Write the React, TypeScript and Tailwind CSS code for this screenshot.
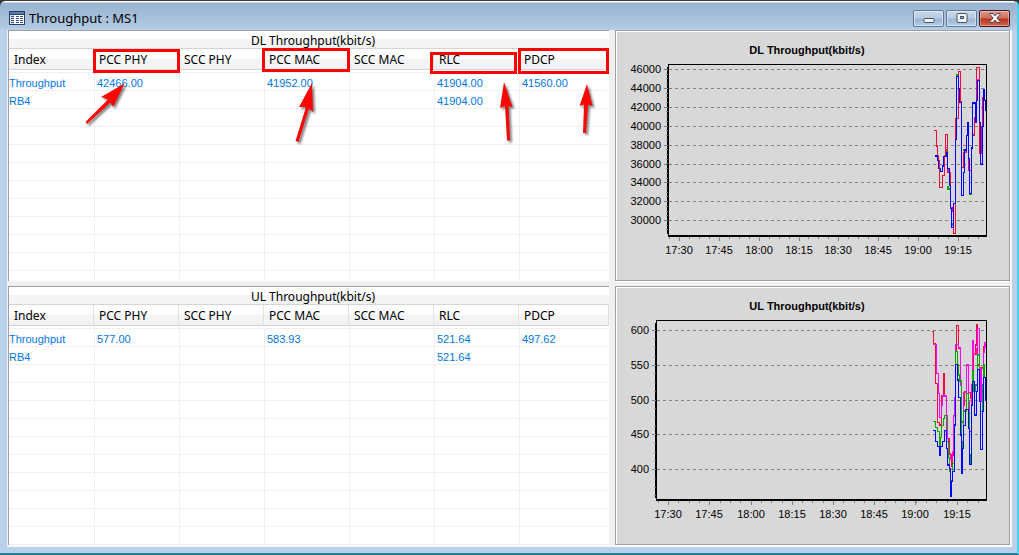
import React from "react";

const columns = ["Index", "PCC PHY", "SCC PHY", "PCC MAC", "SCC MAC", "RLC", "PDCP"];

const dlRows = [
  ["Throughput", "42466.00", "", "41952.00", "", "41904.00", "41560.00"],
  ["RB4", "", "", "", "", "41904.00", ""],
];

const ulRows = [
  ["Throughput", "577.00", "", "583.93", "", "521.64", "497.62"],
  ["RB4", "", "", "", "", "521.64", ""],
];

function DataTable({ title, rows, total }: { title: string; rows: string[][]; total: number }) {
  const filled = Array.from({ length: total }, (_, i) => rows[i] ?? columns.map(() => ""));
  return (
    <table className="w-full table-fixed border-separate border-spacing-0 bg-white">
      <caption className="h-[18px] border-b border-[#d5d5d5] bg-[linear-gradient(#fff_45%,#f2f4f6_50%,#f2f4f6)] pl-2 text-center text-[12px] leading-[20px] text-black">
        {title}
      </caption>
      <colgroup>
        {columns.map((c, i) => (
          <col key={c} className={i === columns.length - 1 ? "w-[15%]" : "w-[14.16%]"} />
        ))}
      </colgroup>
      <thead>
        <tr>
          {columns.map((c) => (
            <th
              key={c}
              scope="col"
              className="h-[21px] border-r border-b border-r-[#e0e3e6] border-b-[#d5d5d5] bg-[linear-gradient(#fff_45%,#f4f5f7_50%,#f1f2f4)] p-0 pt-[2px] pl-[5px] text-left text-[12px] leading-[18px] font-normal text-black"
            >
              {c}
            </th>
          ))}
        </tr>
      </thead>
      <tbody>
        <tr aria-hidden="true">
          {columns.map((c, j) => (
            <td key={c} className={`h-[3px] border-b border-[#f0f0f0] p-0 ${j ? "border-l" : ""}`} />
          ))}
        </tr>
        {filled.map((r, i) => (
          <tr key={i}>
            {r.map((v, j) => (
              <td
                key={j}
                className={`h-[18px] border-b border-[#f0f0f0] p-0 pt-[4px] ${j ? "border-l pl-[2px]" : ""} font-['Liberation_Sans',sans-serif] text-[11px] leading-[13px] text-[#0078e0]`}
              >
                {v}
              </td>
            ))}
          </tr>
        ))}
      </tbody>
    </table>
  );
}

type Series = { color: string; d: string; width?: number };
type ChartProps = {
  title: string;
  viewBox: string;
  titleY: number;
  plot: { left: number; top: number; bottom: number };
  yTicks: [string, number][];
  yMinor: number;
  xTicks: number[];
  xMinor: number;
  origin: string;
  series: Series[];
};

const times = ["17:30", "17:45", "18:00", "18:15", "18:30", "18:45", "19:00", "19:15"];
const RIGHT = 986;

function range(from: number, to: number, step: number) {
  const out: number[] = [];
  for (let v = from; v <= to; v += step) out.push(Math.round(v));
  return out;
}

function Chart({ title, viewBox, titleY, plot, yTicks, yMinor, xTicks, xMinor, origin, series }: ChartProps) {
  const { left, top, bottom } = plot;
  const firstY = yTicks[0][1];
  const minorY = range(firstY, bottom - 3, yMinor);
  const minorX = range(xTicks[0] - xMinor, RIGHT - 2, xMinor);
  return (
    <svg
      viewBox={viewBox}
      className="block h-full w-full font-['Liberation_Sans',sans-serif] text-[11px]"
      role="img"
      aria-label={title}
    >
      <text x="807" y={titleY} textAnchor="middle" className="font-bold">
        {title}
      </text>
      <g shapeRendering="crispEdges">
        {yTicks.map(([label, y]) => (
          <g key={label} stroke="#808080">
            <path d={`M${left - 4} ${y + 0.5}H${left}`} />
            <path d={`M${left + 1} ${y + 0.5}H${RIGHT}`} strokeDasharray="3 3" />
          </g>
        ))}
        <path d={`M${left - 0.5} ${top + 3}V${bottom - 2}`} stroke="#000" />
        {minorY.map((y) => (
          <path key={y} d={`M${left - 2} ${y + 0.5}H${left}`} stroke="#808080" />
        ))}
        {minorX.map((x) => (
          <path key={x} d={`M${x + 0.5} ${bottom + 1}V${bottom + 3}`} stroke="#808080" />
        ))}
        {xTicks.map((x) => (
          <path key={x} d={`M${x + 0.5} ${bottom + 1}V${bottom + 5}`} stroke="#808080" />
        ))}
        <g transform={origin} fill="none">
          {series.map((s, i) => (
            <path key={i} d={s.d} stroke={s.color} strokeWidth={s.width ?? 3.6} />
          ))}
        </g>
        <path d={`M${left + 0.5} ${bottom}V${top + 0.5}H${RIGHT + 0.5}V${bottom}`} fill="none" stroke="#000" />
        <path d={`M${left} ${bottom}H${RIGHT + 1}`} stroke="#000" strokeWidth="2" />
      </g>
      {yTicks.map(([label, y]) => (
        <text key={label} x={left - 7} y={y + 4} textAnchor="end">
          {label}
        </text>
      ))}
      {xTicks.map((x, i) => (
        <text key={x} x={x} y={bottom + 18} textAnchor="middle">
          {times[i]}
        </text>
      ))}
    </svg>
  );
}

const RED = "#f5093c";
const BLUE = "#0000ff";
const GREEN = "#00a800";
const MAGENTA = "#ff00ff";

const dlSeries: Series[] = [
  { color: GREEN, d: "M105 302H112M136 284H142V292M145 392V401H150M169 59H176M202 203H207M202 207H207M208 418H215M178 101V112M154 508H160M190 284H200M133 304H137", width: 6 },
  { color: RED, d: "M102 227H109V273H112V302H115V317H119V397H127V361H133V304H137V238H142V352H151V457H157V470H161V535H166V447H167V190H175V49H181V140H184V338H190V292H200V242H205V346H214V279H217V240H223V187H229V38H238V296H245V216H248V127H254V104" },
  { color: MAGENTA, d: "M121 349H127M136 277H142M217 142H224M232 73H239M241 326H247M250 104H254M193 290H199M154 511H158M147 342V351" },
  { color: BLUE, d: "M105 303H112V317H115V340H121V349H127V333H130V305H139V293H142V341H148V391H151V460H154V517H160V445H166V254H169V64H175V101H178V142H184V421H190V352H193V285H199V242H202V203H206V310H208V416H214V279H217V144H226V202H229V136H232V76H238V203H241V328H247V214H250V104H253V136H257V167" },
];

const ulSeries: Series[] = [
  { color: RED, d: "M97 79H100V117H106V235H112V352H118V360H124V273H130V205H133V273H139V400H148V448H154V485H157V450H160V333H166V140H169V61H175V130H181V240H184V352H190V300H193V260H199V180H205V262H211V279H214V240H220V145H226V120H230V58H233V180H238V210H241V187H250V125H257" },
  { color: MAGENTA, d: "M100 118H109V205H115V265H118V338H124V300H127V273H139V333H142V400H145V445H151V462H157V440H160V335H163V277H166V118H175V128H181V240H184V350H190V262H199V178H206V290H208V380H214V240H217V107H220V148H229V130H232V70H239V190H241V290H245V190H250V143H254V113H257V130" },
  { color: GREEN, d: "M100 350H106V367H112V380H118V420H121V397H124V361H130V341H133V331H139V410H145V458H148V500H151V528H157V475H163V360H166V140H172V180H175V210H178V228H184V430H187V410H190V318H199V265H206V320H208V450H211V475H214V300H217V197H220V260H226V240H232V150H238V290H241V320H248V240H251V180H254V215" },
  { color: BLUE, d: "M100 376H106V409H112V425H118V451H121V425H127V409H133V376H139V430H142V480H148V490H151V574H154V530H157V499H163V360H166V178H172V225H175V277H181V390H184V505H187V430H190V361H196V314H206V370H208V478H214V300H217V229H223V330H229V260H232V193H238V290H241V433H247V320H250V217H256V287" },
];

function Annotations() {
  return (
    <svg
      viewBox="9 31 600 250"
      className="pointer-events-none absolute inset-0 h-full w-full"
      aria-hidden="true"
    >
      <g fill="none" stroke="#ff0000" strokeWidth="3">
        <rect x="94.5" y="50.5" width="84" height="21" />
        <rect x="263.5" y="49.5" width="85" height="21" />
        <rect x="431.5" y="53.5" width="84" height="19" />
        <rect x="519.5" y="49.5" width="88" height="23" />
      </g>
      <g fill="#fb0505" className="drop-shadow-[2px_2px_1px_rgba(0,0,0,0.5)]">
        <path d="M124.500 83.500L101 97L108 99.500L85.500 122L87 124L110.500 102.500L113 107Z" />
        <path d="M312 83L299 107L306 107L295.500 141L298.500 142L309 108.500L313 112Z" />
        <path d="M504 82L500 108L505 106L507 140.500L510 140.500L508.500 106L512.500 107Z" />
        <path d="M587 84L579.500 106L584 104.500L583 133L586 133L588 104.500L592.500 106Z" />
      </g>
    </svg>
  );
}

function TitleBar() {
  const glass =
    "flex h-[17px] w-[31px] items-center justify-center rounded-[2px] border border-[#5d7796] bg-[linear-gradient(#c5d7ea,#b7cce2_48%,#9ab5d1_52%,#b4cde6)] shadow-[inset_0_0_0_1px_rgba(255,255,255,0.5)]";
  return (
    <header className="flex h-[29px] shrink-0 items-center pt-[5px] pr-[7px] pl-[9px]">
      <svg width="16" height="14" viewBox="0 0 16 14" className="shrink-0" shapeRendering="crispEdges" aria-hidden="true">
        <rect width="16" height="14" fill="#2b3f63" />
        <rect x="1" y="1" width="14" height="2" fill="#5a7db2" />
        <rect x="1" y="4" width="14" height="9" fill="#fff" />
        <rect x="1" y="4" width="4" height="9" fill="#d5e3f5" />
        <path d="M2 5.500H5M2 7.500H5M2 9.500H5M2 11.500H5M7 5.500H10M7 7.500H10M7 9.500H10M7 11.500H10M11 5.500H14M11 7.500H14M11 9.500H14M11 11.500H14" stroke="#3d5580" />
      </svg>
      <h1 className="ml-1 text-[13px] leading-[18px] text-black">Throughput : MS1</h1>
      <div className="ml-auto flex gap-[2px]">
        <button type="button" aria-label="Minimize" className={glass}>
          <svg width="12" height="10" viewBox="0 0 12 10">
            <rect x="1" y="5.500" width="10" height="4" rx="1" fill="#f4f4f4" stroke="#4b5566" />
          </svg>
        </button>
        <button type="button" aria-label="Maximize" className={glass}>
          <svg width="12" height="10" viewBox="0 0 12 10">
            <rect x="1" y=".5" width="10" height="9" rx="1" fill="#f4f4f4" stroke="#4b5566" />
            <rect x="4.500" y="3.500" width="3" height="2" fill="#8fa9c8" stroke="#4b5566" />
          </svg>
        </button>
        <button
          type="button"
          aria-label="Close"
          className="flex h-[17px] w-[31px] items-center justify-center rounded-[2px] border border-[#4a1420] bg-[linear-gradient(#dc9a8c,#cf6d58_48%,#b8321a_52%,#d0694f)] shadow-[inset_0_0_0_1px_rgba(255,255,255,0.35)]"
        >
          <svg width="12" height="10" viewBox="0 0 12 10">
            <path d="M1 .5H4L6 2.800L8 .5H11V1.500L8 5L11 8.500V9.500H8L6 7.200L4 9.500H1V8.500L4 5L1 1.500Z" fill="#f4f4f4" stroke="#4d4450" strokeLinejoin="round" />
          </svg>
        </button>
      </div>
    </header>
  );
}

const tablePanel = "relative min-h-0 overflow-hidden border-t border-l border-[#a0a0a0] bg-white";
const chartPanel =
  "min-h-0 overflow-hidden border border-[#a0a0a0] bg-[#d8d8d8] shadow-[inset_1px_1px_0_#fff,1px_1px_0_#fff]";

export default function App() {
  return (
    <div className="h-screen bg-[#333] font-['Noto_Sans','Open_Sans',sans-serif]">
      <div className="flex h-full flex-col rounded-t-[6px] border-t border-r-2 border-b-2 border-t-[#3a3a40] border-r-[#4cd0f0] border-b-[#1d7f95] bg-[linear-gradient(#fff_0,#fff_1px,#98b3d0_2px,#b0c8e2_26px,#b9d1ea_30px,#b9d1ea)]">
        <TitleBar />
        <main className="mr-[5px] mb-[6px] ml-[7px] grid min-h-0 flex-1 grid-cols-[601fr_395fr] grid-rows-[251fr_259fr] gap-x-[6px] gap-y-[5px] border-r-2 border-b-2 border-l border-r-[#f5f5f5] border-b-[#f8f8f8] border-l-[#f0f0f0] bg-[#f0f0f0]">
          <section className={tablePanel}>
            <DataTable title="DL Throughput(kbit/s)" rows={dlRows} total={12} />
            <Annotations />
          </section>
          <section className={chartPanel}>
            <Chart
              title="DL Throughput(kbit/s)"
              viewBox="616 31 393 249"
              titleY={54}
              plot={{ left: 668, top: 64, bottom: 236 }}
              yTicks={[
                ["46000", 69],
                ["44000", 88],
                ["42000", 107],
                ["40000", 126],
                ["38000", 145],
                ["36000", 164],
                ["34000", 182],
                ["32000", 201],
                ["30000", 220],
              ]}
              yMinor={4.72}
              xTicks={[679, 719, 759, 799, 838, 878, 918, 958]}
              xMinor={9.96}
              origin="translate(900 55) scale(0.3333)"
              series={dlSeries}
            />
          </section>
          <section className={tablePanel}>
            <DataTable title="UL Throughput(kbit/s)" rows={ulRows} total={13} />
          </section>
          <section className={chartPanel}>
            <Chart
              title="UL Throughput(kbit/s)"
              viewBox="616 287 393 257"
              titleY={310}
              plot={{ left: 656, top: 320, bottom: 500 }}
              yTicks={[
                ["600", 330],
                ["550", 365],
                ["500", 400],
                ["450", 434],
                ["400", 469],
              ]}
              yMinor={8.7}
              xTicks={[668, 709, 751, 792, 833, 874, 915, 957]}
              xMinor={10.32}
              origin="translate(900 305) scale(0.3333)"
              series={ulSeries}
            />
          </section>
        </main>
      </div>
    </div>
  );
}
